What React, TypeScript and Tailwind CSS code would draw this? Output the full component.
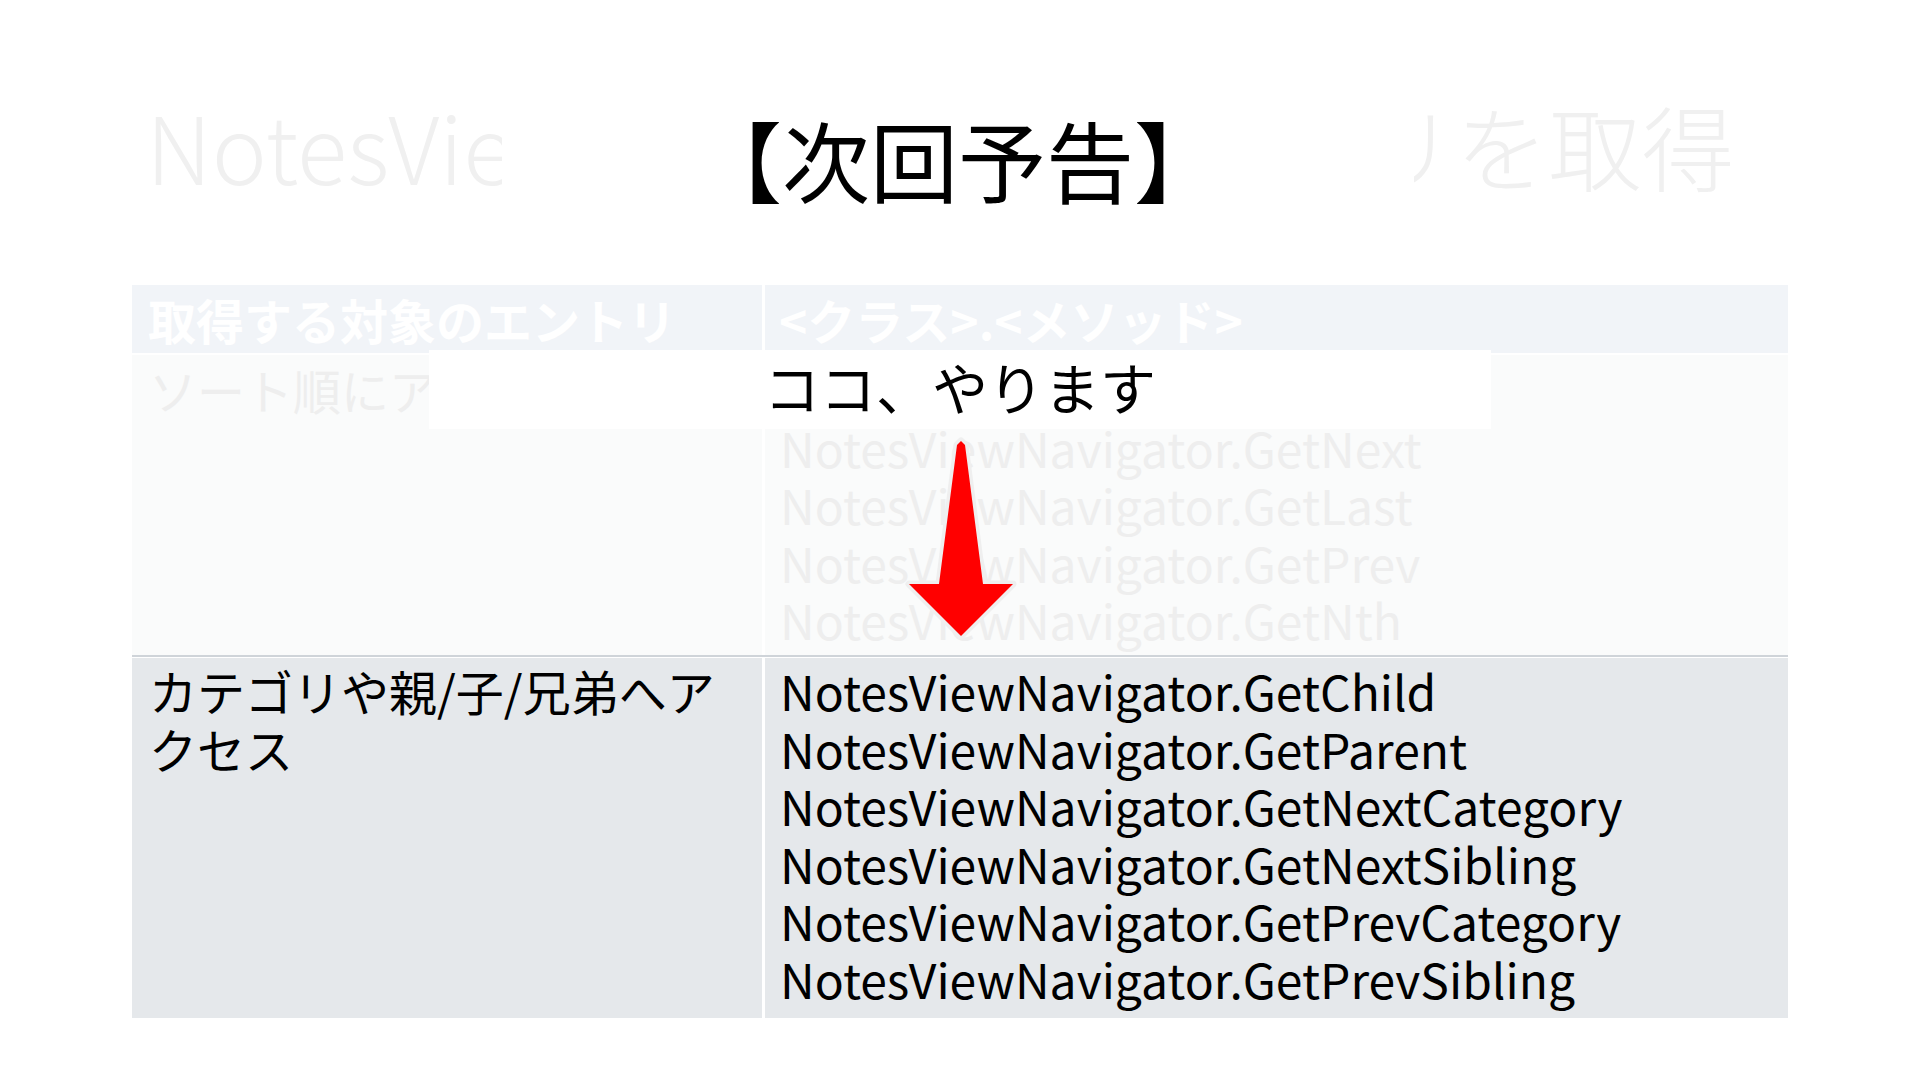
import React from "react";

const row1Lines = [
  "NotesViewNavigator.GetFirst",
  "NotesViewNavigator.GetNext",
  "NotesViewNavigator.GetLast",
  "NotesViewNavigator.GetPrev",
  "NotesViewNavigator.GetNth",
];

const row2Lines = [
  "NotesViewNavigator.GetChild",
  "NotesViewNavigator.GetParent",
  "NotesViewNavigator.GetNextCategory",
  "NotesViewNavigator.GetNextSibling",
  "NotesViewNavigator.GetPrevCategory",
  "NotesViewNavigator.GetPrevSibling",
];

function DownArrow() {
  const d = "M60 5 L64 9 L82 148 L112 148 L60 200 L8 148 L38 148 L56 9 Z";
  return (
    <svg width="120" height="210" viewBox="0 0 120 210">
      <path d={d} fill="none" stroke="#efefef" strokeWidth="7" strokeLinejoin="round" />
      <path d={d} fill="#ff0000" />
    </svg>
  );
}

export default function App() {
  return (
    <div className="relative w-[1920px] h-[1080px] overflow-hidden bg-white font-['Noto_Sans_CJK_JP',sans-serif]">
      {/* faded previous slide title */}
      <div className="pt-[98px] pl-[146px] text-[93px] leading-none text-[#f0f0f0] whitespace-nowrap font-light">
        NotesViewNavigatorでエントリを取得
      </div>

      {/* table */}
      <div className="mt-[94px] ml-[132px] w-[1656px]">
        <div className="grid grid-cols-[633px_1023px] h-[68px] bg-[#f1f4f8] text-white font-bold text-[48px] leading-none">
          <div className="flex items-center pl-[16px] border-r-[3px] border-white">取得する対象のエントリ</div>
          <div className="flex items-center pl-[14px]">&lt;クラス&gt;.&lt;メソッド&gt;</div>
        </div>
        <div className="mt-[2px] grid grid-cols-[633px_1023px] h-[300px] bg-[#fafbfb] text-[48px] leading-[57.6px] text-[#eeeeee]">
          <div className="pl-[17px] pr-[16px] pt-[6px] border-r-[3px] border-white">ソート順にアクセス</div>
          <div className="pl-[15px] pt-[6px] whitespace-nowrap">
            {row1Lines.map((l) => (
              <div key={l}>{l}</div>
            ))}
          </div>
        </div>
        <div className="h-[2px] bg-[#cfd4d9]" />
        <div className="mt-[1px] grid grid-cols-[633px_1023px] h-[360px] bg-[#e5e8eb] text-[48px] leading-[57.6px] text-black">
          <div className="pl-[17px] pr-[16px] pt-[4px] border-r-[3px] border-white">カテゴリや親/子/兄弟へアクセス</div>
          <div className="pl-[15px] pt-[4px] whitespace-nowrap">
            {row2Lines.map((l) => (
              <div key={l}>{l}</div>
            ))}
          </div>
        </div>
      </div>

      {/* overlay: new title */}
      <div className="absolute left-[502px] top-[84px] w-[912px] h-[148px] bg-white flex items-center justify-center text-[88px] leading-none text-black whitespace-nowrap">
        【次回予告】
      </div>

      {/* overlay: callout */}
      <div className="absolute left-[429px] top-[350px] w-[1062px] h-[79px] bg-white flex items-center justify-center pb-[8px] text-[56px] leading-none text-black whitespace-nowrap">
        ココ、やります
      </div>

      {/* overlay: arrow */}
      <div className="absolute left-[901px] top-[436px]">
        <DownArrow />
      </div>
    </div>
  );
}
